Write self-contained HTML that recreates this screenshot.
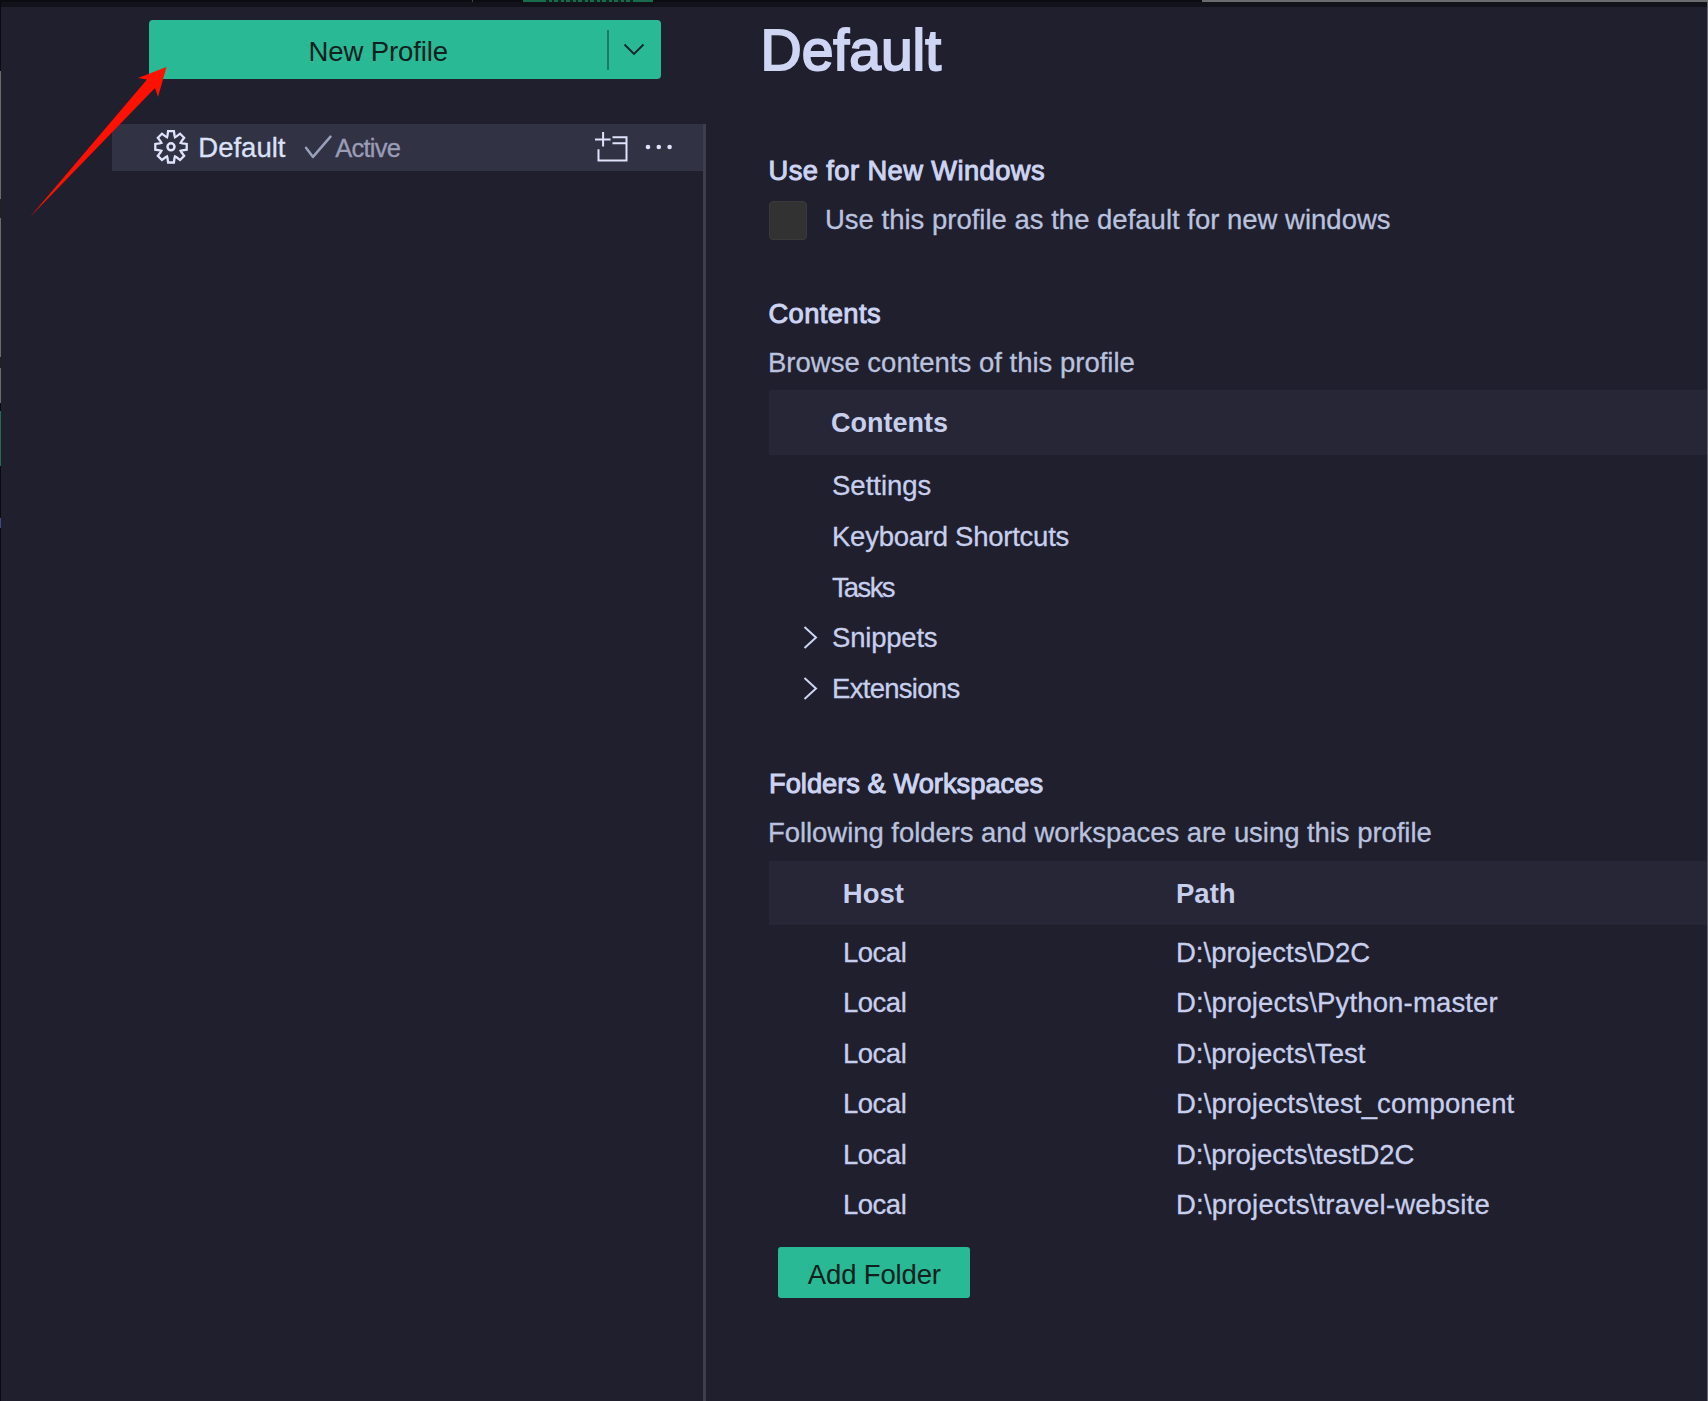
<!DOCTYPE html>
<html><head><meta charset="utf-8">
<style>
html,body{margin:0;padding:0;}
body{width:1708px;height:1401px;background:#1f1f2e;position:relative;overflow:hidden;font-family:"Liberation Sans",sans-serif;color:#c8cfec;}
.a{position:absolute;white-space:nowrap;line-height:1;}
.r{font-size:27.5px;-webkit-text-stroke:0.3px currentColor;}
.b{font-weight:bold;}
.desc{color:#bac2de;}
</style></head><body>
<!-- top chrome band -->
<div class="a" style="left:0;top:0;width:1708px;height:2px;background:#0b0b12"></div>
<div class="a" style="left:0;top:2px;width:1708px;height:5px;background:#12121b"></div>
<div class="a" style="left:1202px;top:0;width:506px;height:2px;background:#6b6b6b"></div>
<div class="a" style="left:523px;top:0;width:130px;height:2px;background:#1a6a4e"></div>
<div class="a" style="left:546px;top:0;width:87px;height:2px;background:repeating-linear-gradient(90deg,#0c2a20 0 3px,#1a6a4e 3px 6px,#0c2a20 6px 8px,#1a6a4e 8px 12px)"></div>
<div class="a" style="left:472px;top:0;width:1px;height:2px;background:#444"></div>
<!-- left edge -->
<div class="a" style="left:0;top:0;width:1px;height:1401px;background:#0a0a10"></div>
<div class="a" style="left:0;top:71px;width:1px;height:332px;background:#6b6b6b"></div>
<div class="a" style="left:0;top:411px;width:1px;height:55px;background:#1d6e55"></div>
<div class="a" style="left:0;top:199px;width:1px;height:19px;background:#222"></div>
<div class="a" style="left:0;top:357px;width:1px;height:11px;background:#222"></div>
<div class="a" style="left:0;top:518px;width:1px;height:10px;background:#3a4a8a"></div>
<!-- right edge -->
<div class="a" style="left:1707px;top:0;width:1px;height:1401px;background:#6b6b6b"></div>

<!-- New Profile button -->
<div class="a" style="left:149px;top:20px;width:512px;height:59px;background:#29b994;border-radius:4px"></div>
<div class="a" style="left:607px;top:30px;width:2px;height:40px;background:#1d7c66"></div>
<svg class="a" style="left:620px;top:40px" width="28" height="20" viewBox="0 0 28 20"><path d="M4.5 4.5 L14 14 L23.5 4.5" fill="none" stroke="#16262a" stroke-width="1.8"/></svg>
<div class="a r" id="t-newprofile" style="left:308.5px;-webkit-text-stroke:0;letter-spacing:-0.1px;top:37.5px;color:#10201c">New Profile</div>

<!-- profile row -->
<div class="a" style="left:112px;top:124px;width:591px;height:47px;background:#313244"></div>
<div class="a" style="left:703px;top:124px;width:3px;height:1277px;background:#3e3e4c"></div>
<svg class="a" style="left:152px;top:128px" width="38" height="38" viewBox="0 0 38 38"><path d="M15.02 9.19 L15.50 7.50 L16.10 3.10 L21.90 3.10 L22.50 7.50 L22.98 9.19 L24.52 8.33 L28.05 5.65 L32.15 9.75 L29.47 13.28 L28.61 14.82 L30.30 15.30 L34.70 15.90 L34.70 21.70 L30.30 22.30 L28.61 22.78 L29.47 24.32 L32.15 27.85 L28.05 31.95 L24.52 29.27 L22.98 28.41 L22.50 30.10 L21.90 34.50 L16.10 34.50 L15.50 30.10 L15.02 28.41 L13.48 29.27 L9.95 31.95 L5.85 27.85 L8.53 24.32 L9.39 22.78 L7.70 22.30 L3.30 21.70 L3.30 15.90 L7.70 15.30 L9.39 14.82 L8.53 13.28 L5.85 9.75 L9.95 5.65 L13.48 8.33 Z" fill="none" stroke="#dfe3fb" stroke-width="2.3" stroke-linejoin="miter"/><circle cx="19" cy="18.8" r="3.5" fill="none" stroke="#dfe3fb" stroke-width="2.5"/></svg>
<div class="a r" id="t-rowdefault" style="left:198.3px;color:#dce1f9;top:134px">Default</div>
<svg class="a" style="left:302px;top:133px" width="32" height="28" viewBox="0 0 32 28"><path d="M4 14.7 L11 23.9 L28.5 3.6" fill="none" stroke="#9a9fbb" stroke-width="2.5" stroke-linecap="round" stroke-linejoin="round"/></svg>
<div class="a r" id="t-active" style="left:335.2px;top:135.6px;font-size:25.5px;letter-spacing:-0.76px;color:#9a9db6">Active</div>
<svg class="a" style="left:592px;top:128px" width="40" height="38" viewBox="0 0 40 38">
<path d="M11.1 4 V18.5 M3 11.5 H18.6 M20.5 9.2 H34.5 V32.6 H6.5 V21.3 M20.5 15.3 H34.5" fill="none" stroke="#dfe3fb" stroke-width="2"/>
</svg>
<svg class="a" style="left:640px;top:140px" width="40" height="14" viewBox="0 0 40 14">
<circle cx="8" cy="7" r="2.3" fill="#dfe3fb"/><circle cx="18.8" cy="7" r="2.3" fill="#dfe3fb"/><circle cx="29.6" cy="7" r="2.3" fill="#dfe3fb"/>
</svg>

<!-- red arrow -->
<svg class="a" style="left:0;top:0" width="200" height="240" viewBox="0 0 200 240">
<path d="M30 217 L147 79.5 L138 78 L166.5 67 L158 97 L155 88 Z" fill="#fe1100"/>
</svg>

<!-- right content -->
<div class="a" id="t-title" style="color:#cfd6f4;left:760.5px;top:22.2px;font-size:57px;-webkit-text-stroke:2px currentColor">Default</div>
<div class="a" id="t-h1" style="color:#cdd4f2;left:768.5px;top:156.5px;font-size:27.3px;-webkit-text-stroke:1px currentColor;letter-spacing:0.42px">Use for New Windows</div>
<div class="a" style="left:769px;top:201px;width:38px;height:39px;background:#323232;border-radius:4px;box-sizing:border-box;border:1px solid #3a3a3a"></div>
<div class="a r desc" id="t-usethis" style="left:825px;top:206px">Use this profile as the default for new windows</div>

<div class="a" id="t-h2" style="color:#cdd4f2;left:768.5px;top:299.8px;font-size:27.3px;-webkit-text-stroke:1px currentColor;letter-spacing:0.4px">Contents</div>
<div class="a r desc" id="t-browse" style="left:768px;top:349px">Browse contents of this profile</div>

<div class="a" style="left:769px;top:390px;width:938px;height:65px;background:#262637"></div>
<div class="a b" id="t-th1" style="left:831px;top:409.5px;font-size:27px">Contents</div>
<div class="a r" id="t-settings" style="left:832px;top:472px">Settings</div>
<div class="a r" id="t-kb" style="left:832px;top:523px;letter-spacing:-0.25px">Keyboard Shortcuts</div>
<div class="a r" id="t-tasks" style="left:832px;top:574px"><span style="letter-spacing:-5px">T</span><span style="letter-spacing:-1.6px">ask</span>s</div>
<div class="a r" id="t-snip" style="left:832px;top:624px;letter-spacing:-0.2px">Snippets</div>
<div class="a r" id="t-ext" style="left:832px;top:675px;letter-spacing:-0.7px">Extensions</div>
<svg class="a" style="left:800px;top:624px" width="22" height="28" viewBox="0 0 22 28"><path d="M4.5 3 L16 13.5 L4.5 24" fill="none" stroke="#cdd6f4" stroke-width="2"/></svg>
<svg class="a" style="left:800px;top:675px" width="22" height="28" viewBox="0 0 22 28"><path d="M4.5 3 L16 13.5 L4.5 24" fill="none" stroke="#cdd6f4" stroke-width="2"/></svg>

<div class="a" id="t-h3" style="color:#cdd4f2;left:769px;top:770.3px;font-size:27.3px;-webkit-text-stroke:1px currentColor;letter-spacing:0px">Folders &amp; Workspaces</div>
<div class="a r desc" id="t-following" style="left:768px;top:819px;letter-spacing:-0.05px">Following folders and workspaces are using this profile</div>

<div class="a" style="left:769px;top:861px;width:938px;height:64px;background:#262637"></div>
<div class="a b" id="t-host" style="left:842.8px;top:880px;font-size:27.5px">Host</div>
<div class="a b" id="t-path" style="left:1176px;top:880px;font-size:27.5px">Path</div>

<div class="a r" id="t-local1" style="left:843px;letter-spacing:-0.5px;top:939px">Local</div>
<div class="a r" id="t-local2" style="left:843px;letter-spacing:-0.5px;top:989px">Local</div>
<div class="a r" id="t-local3" style="left:843px;letter-spacing:-0.5px;top:1040px">Local</div>
<div class="a r" id="t-local4" style="left:843px;letter-spacing:-0.5px;top:1090px">Local</div>
<div class="a r" id="t-local5" style="left:843px;letter-spacing:-0.5px;top:1141px">Local</div>
<div class="a r" id="t-local6" style="left:843px;letter-spacing:-0.5px;top:1191px">Local</div>
<div class="a r" id="t-p1" style="left:1176px;top:939px">D:\projects\D2C</div>
<div class="a r" id="t-p2" style="left:1176px;letter-spacing:0.16px;top:989px">D:\projects\Python-master</div>
<div class="a r" id="t-p3" style="left:1176px;top:1040px">D:\projects\Test</div>
<div class="a r" id="t-p4" style="left:1176px;letter-spacing:0.14px;top:1090px">D:\projects\test_component</div>
<div class="a r" id="t-p5" style="left:1176px;top:1141px">D:\projects\testD2C</div>
<div class="a r" id="t-p6" style="left:1176px;letter-spacing:0.2px;top:1191px">D:\projects\travel-website</div>

<div class="a" style="left:778px;top:1247px;width:192px;height:51px;background:#29b994;border-radius:3px"></div>
<div class="a r" id="t-addfolder" style="left:807.8px;-webkit-text-stroke:0;top:1261px;letter-spacing:-0.15px;color:#10201c">Add Folder</div>
</body></html>
